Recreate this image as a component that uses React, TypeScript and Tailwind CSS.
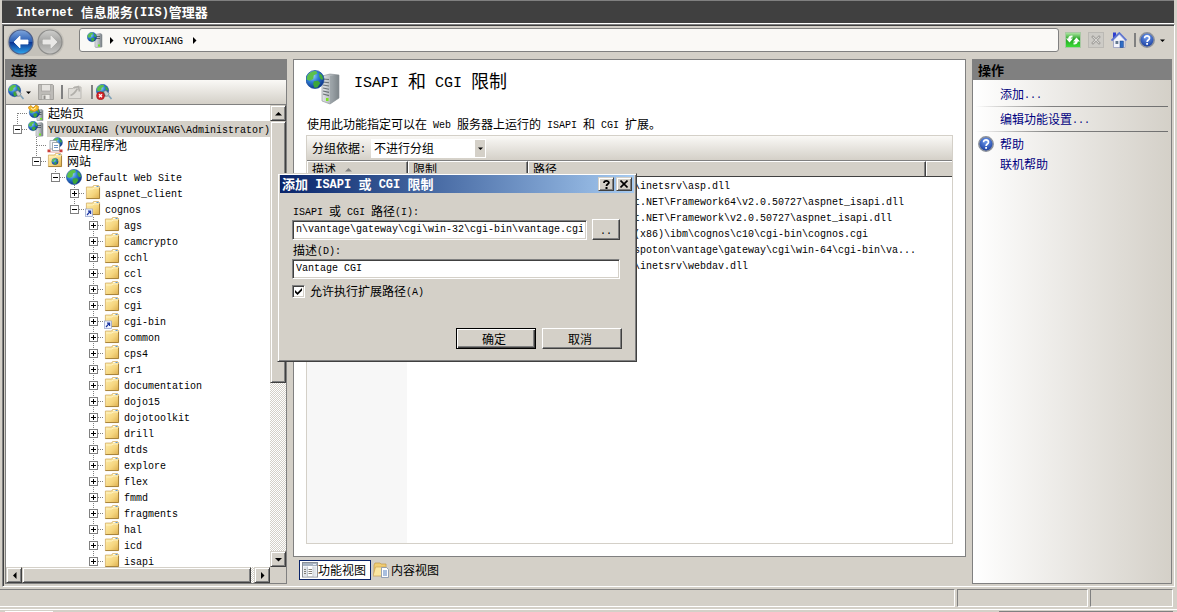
import type { ReactNode } from "react";

const LATIN = /([\x20-\x7e]+)/;

/** Chinese glyphs keep the inherited size; Latin runs use a half-width monospace face. */
function Mixed({ text, latin = "text-[10px]" }: { text: string; latin?: string }) {
  return (
    <span>
      {text.split(LATIN).map((part, i) =>
        i % 2 === 1 ? (
          <span key={i} className={`align-[1px] leading-none whitespace-pre font-['Liberation_Mono',monospace] ${latin}`}>
            {part}
          </span>
        ) : (
          part
        ),
      )}
    </span>
  );
}

const raised =
  "border border-t-[#d4d0c8] border-l-[#d4d0c8] border-r-[#404040] border-b-[#404040] bg-[#d4d0c8] shadow-[inset_1px_1px_#fff,inset_-1px_-1px_#808080]";
const pushButton =
  "border border-t-white border-l-white border-r-[#404040] border-b-[#404040] bg-[#d4d0c8] shadow-[inset_-1px_-1px_#808080]";
const sunken =
  "border border-t-[#808080] border-l-[#808080] border-r-white border-b-white bg-white shadow-[inset_1px_1px_#404040,inset_-1px_-1px_#d4d0c8]";
const checker =
  "bg-[repeating-conic-gradient(#ffffff_0%_25%,#d4d0c8_0%_50%)] bg-[length:2px_2px]";

/* ---------- icons ---------- */

function Defs() {
  return (
    <svg className="absolute size-0" aria-hidden="true">
      <defs>
        <radialGradient id="sea" cx="35%" cy="30%" r="75%">
          <stop offset="0" stopColor="#a9dcfb" />
          <stop offset="0.45" stopColor="#2f7fd6" />
          <stop offset="1" stopColor="#0b2f86" />
        </radialGradient>
        <linearGradient id="server" x1="0" x2="1" y1="0" y2="0">
          <stop offset="0" stopColor="#e3e6e9" />
          <stop offset="0.6" stopColor="#a9b0b5" />
          <stop offset="1" stopColor="#70777c" />
        </linearGradient>
        <linearGradient id="folder" x1="0" x2="1" y1="0" y2="1">
          <stop offset="0" stopColor="#fff0b0" />
          <stop offset="0.6" stopColor="#f5d57e" />
          <stop offset="1" stopColor="#dcae4d" />
        </linearGradient>
        <linearGradient id="back" x1="0" x2="0" y1="0" y2="1">
          <stop offset="0" stopColor="#7fa6dc" />
          <stop offset="0.48" stopColor="#2a5eb4" />
          <stop offset="0.52" stopColor="#0c3592" />
          <stop offset="1" stopColor="#2fa7ee" />
        </linearGradient>
        <linearGradient id="forward" x1="0" x2="0" y1="0" y2="1">
          <stop offset="0" stopColor="#cfcfcd" />
          <stop offset="0.5" stopColor="#a3a3a1" />
          <stop offset="1" stopColor="#c6c6c4" />
        </linearGradient>
        <radialGradient id="help" cx="50%" cy="30%" r="70%">
          <stop offset="0" stopColor="#6f9cf0" />
          <stop offset="1" stopColor="#163a9c" />
        </radialGradient>
        <linearGradient id="green" x1="0" x2="0" y1="0" y2="1">
          <stop offset="0" stopColor="#b4e8a8" />
          <stop offset="0.45" stopColor="#23a423" />
          <stop offset="1" stopColor="#3fe03a" />
        </linearGradient>
      </defs>
    </svg>
  );
}

function Globe({ cx, cy, r }: { cx: number; cy: number; r: number }) {
  return (
    <g transform={`translate(${cx} ${cy}) scale(${r / 8})`}>
      <circle r="7.6" fill="url(#sea)" stroke="#1c4f9c" strokeWidth="0.6" />
      <path d="M-6.5-3C-5-6-2-7.3 1-7.2L2-5-1-3.5-1.5-.5-4.5 1-7 0Z" fill="#5cc04a" />
      <path d="M-1 1.5 2.5 1 4.5 3 2 6.8-.5 7-1.5 4Z" fill="#3da63a" />
      <path d="M3.5-5.5 6-3.5 7 0 5 0 3.5-2.5Z" fill="#43aa3c" />
    </g>
  );
}

function Svg({ size = "size-4", box = 16, children }: { size?: string; box?: number; children: ReactNode }) {
  return (
    <svg className={`${size} shrink-0`} viewBox={`0 0 ${box} ${box}`} aria-hidden="true">
      {children}
    </svg>
  );
}

const ServerIcon = () => (
  <Svg>
    <path d="M8 2.5 13.5 1.5 15 2.5V15L9 15.5 8 15Z" fill="url(#server)" stroke="#8d9499" strokeWidth="0.6" />
    <path d="M9 4.5H13M9 6.5H13" stroke="#4a5055" strokeWidth="0.8" />
    <rect x="11" y="12.5" width="2" height="2" fill="#6eea1c" />
    <Globe cx={5} cy={5} r={5} />
  </Svg>
);

const StartIcon = () => (
  <Svg>
    <path d="M9 5 14 4.5 15 5.5V15.5H9Z" fill="url(#server)" stroke="#8d9499" strokeWidth="0.6" />
    <path d="M10 7.5H13.5M10 9.5H13.5" stroke="#4a5055" strokeWidth="0.8" />
    <rect x="12" y="13" width="2" height="1.6" fill="#6eea1c" />
    <Globe cx={6.5} cy={7.5} r={5.5} />
    <path d="M0 2.5 3 .5 5 3 8 0 10.5 1.5 10 5 6.5 6.5 2.5 5.5Z" fill="#f7b928" stroke="#c98410" strokeWidth="0.7" />
    <path d="M3 3 5 4.5 8 2.5" stroke="#fff3b8" fill="none" />
  </Svg>
);

const BigServerIcon = () => (
  <Svg size="size-9" box={36}>
    <path d="M16 6 24 4 33 5V28L24 34 16 31Z" fill="url(#server)" stroke="#858c91" strokeWidth="0.6" />
    <path d="M24 6 33 5V28L24 34Z" fill="#8a9196" opacity="0.5" />
    <path d="M17 9 23 9.5M17 12 23 12.7M17 15 23 16M17 18 23 19.2M17 21 23 22.4M17 24 23 25.6" stroke="#6a7176" strokeWidth="1.1" />
    <rect x="20" y="28" width="2.5" height="3" fill="#7be61e" />
    <Globe cx={9} cy={9.5} r={9.5} />
  </Svg>
);

const AppPoolIcon = () => (
  <Svg>
    <Globe cx={10.5} cy={5.5} r={5.2} />
    <path d="M3 3.5H9L10 5V12H3Z" fill="#f4f6f8" stroke="#8a949c" strokeWidth="0.7" />
    <path d="M5.5 5.5H11L12.5 7V13.5H5.5Z" fill="#fff" stroke="#7d8891" strokeWidth="0.7" />
    <path d="M7 8.5H11M7 10.5H11" stroke="#4978b5" strokeWidth="0.8" />
    <path d="M.5 12.5H3.5V14H12.5V12.5H15.5V15.2H.5Z" fill="#c9403a" />
    <path d="M3.5 14H12.5V15H3.5Z" fill="#ecd9d6" />
  </Svg>
);

const FolderBase = () => (
  <>
    <path d="M1.4 2H7.5L8.5 .6H13.6L14.6 1.6V13.6H1.4Z" fill="url(#folder)" stroke="#cfa65c" strokeWidth="0.7" />
    <path d="M9 1.5H13.6" stroke="#fffbe6" strokeWidth="1" />
    <path d="M11.5 1.5H13.6" stroke="#4f8fd0" strokeWidth="0.9" />
    <path d="M1.4 13.5H14.5V3" stroke="#a8843c" strokeWidth="1" fill="none" />
    <path d="M2 4H8L9 3H14" stroke="#fff6cf" strokeWidth="0.8" fill="none" />
  </>
);

const FolderIcon = () => (
  <Svg>
    <FolderBase />
  </Svg>
);

const SitesIcon = () => (
  <Svg>
    <FolderBase />
    <Globe cx={8} cy={8.5} r={3.4} />
  </Svg>
);

const VirtualDirIcon = () => (
  <Svg>
    <FolderBase />
    <rect x="0.5" y="8" width="7" height="7.5" fill="#f1f4ff" stroke="#8e9dc8" strokeWidth="0.7" />
    <path d="M2 14 4.8 10.8M3 10.2H5.6V13" stroke="#1b35a0" strokeWidth="1.2" fill="none" />
  </Svg>
);

const SiteIcon = () => (
  <Svg>
    <Globe cx={8} cy={8} r={8} />
  </Svg>
);

const ConnectIcon = ({ off = false }: { off?: boolean }) => (
  <Svg>
    <Globe cx={6.5} cy={6.5} r={6.5} />
    <path d="M7.5 7.5 10 6.5 13 9.5 12 12 9.5 12.3Z" fill="#c4ccd2" stroke="#6b757c" strokeWidth="0.7" />
    <path d="M12.5 11.5 15.5 15" stroke="#7fa2b8" strokeWidth="1.6" />
    {off && (
      <>
        <circle cx="4.5" cy="11.8" r="4" fill="#d3232a" stroke="#8f1217" strokeWidth="0.5" />
        <path d="M3 10.3 6 13.3M6 10.3 3 13.3" stroke="#fff" strokeWidth="1.3" />
      </>
    )}
  </Svg>
);

const SaveIcon = () => (
  <Svg>
    <path d="M.5 .5H14.5L15.5 1.5V15.5H.5Z" fill="#bdbbb7" stroke="#a3a19d" />
    <rect x="3.5" y="0.5" width="9" height="6.5" fill="#e6e4e0" stroke="#a3a19d" strokeWidth="0.7" />
    <rect x="4" y="10.5" width="8" height="5" fill="#eceae6" stroke="#a3a19d" strokeWidth="0.7" />
    <rect x="5.5" y="11.5" width="2" height="3.5" fill="#8e8c88" />
  </Svg>
);

const UpFolderIcon = () => (
  <Svg>
    <path d="M1.5 4.5H6L7 3H14V14.5H1.5Z" fill="#dedcd7" stroke="#bbb9b4" />
    <path d="M3.5 11.5C6 10.5 8.5 8 10.5 4.5M6.5 4 11.5 2.5 12.5 7.5" stroke="#b1afaa" strokeWidth="1.6" fill="none" />
  </Svg>
);

const RefreshIcon = () => (
  <Svg>
    <rect x="0.5" y="0.5" width="15" height="15" fill="url(#green)" stroke="#a9c8a4" />
    <path d="M4.5 10.5 1 6.5H3.2C3.4 4.3 5 3.2 7.5 3.5V5.6C6.3 5.4 5.8 5.7 5.8 6.5H8Z" fill="#fff" />
    <path d="M11.5 5.5 15 9.5H12.8C12.6 11.7 11 12.8 8.5 12.5V10.4C9.7 10.6 10.2 10.3 10.2 9.5H8Z" fill="#fff" />
  </Svg>
);

const StopIcon = () => (
  <Svg>
    <rect x="0.5" y="0.5" width="15" height="15" fill="#cdcbc6" stroke="#bbb9b4" />
    <path d="M4 4 12 12M12 4 4 12" stroke="#a8a6a2" strokeWidth="2.6" />
    <path d="M5 5 11 11M11 5 5 11" stroke="#dddbd7" strokeWidth="0.9" />
  </Svg>
);

const HomeIcon = () => (
  <Svg>
    <rect x="2" y="0.5" width="3" height="6" fill="#2f3fd0" />
    <path d="M2.5 8 8.5 2 14 8V15.5H2.5Z" fill="#f3f4fb" stroke="#8b92bb" strokeWidth="0.7" />
    <path d="M.5 8.5 8.3 1 15.5 8.5" stroke="#5d74cf" strokeWidth="1.8" fill="none" />
    <path d="M3 7.8 8.3 2.8 13 7.8" stroke="#c3cdf2" strokeWidth="0.8" fill="none" />
    <rect x="9" y="9" width="3.4" height="6.5" fill="#2f6cc4" stroke="#173f86" strokeWidth="0.5" />
    <rect x="4.5" y="9" width="2.8" height="3" fill="#64788f" />
  </Svg>
);

const HelpIcon = () => (
  <Svg>
    <circle cx="8" cy="8" r="7.2" fill="url(#help)" stroke="#8d929b" strokeWidth="1.5" />
    <path d="M5.6 6.3C5.6 3 10.6 3.2 10.5 6.2 10.4 8 8.1 8 8.1 9.9" stroke="#fff" strokeWidth="1.7" fill="none" />
    <rect x="7.2" y="11" width="1.8" height="1.8" fill="#fff" />
  </Svg>
);

const FeaturesIcon = () => (
  <Svg>
    <rect x="0.5" y="0.5" width="15" height="14.5" fill="#fff" stroke="#8a8f96" />
    <rect x="1" y="1" width="14" height="3" fill="#a8b4c2" />
    <path d="M11 2.5H14" stroke="#e9eef4" />
    <rect x="1.5" y="4.5" width="3.5" height="10" fill="#dfe3e8" />
    <rect x="11.5" y="4.5" width="3" height="10" fill="#e2e6ea" />
    <path d="M5.5 4.5V15M11 4.5V15" stroke="#b3bac2" strokeWidth="0.8" />
    <path d="M6.5 7.5H10M6.5 9.5H10M6.5 11.5H10M2 7.5H4M2 9.5H4M2 11.5H4" stroke="#77746a" strokeWidth="0.9" />
  </Svg>
);

const ContentIcon = () => (
  <Svg>
    <path d="M1 3 2 1H7L8 2H13V13H1Z" fill="#f0cd73" stroke="#c39a45" strokeWidth="0.7" />
    <path d="M0 14 2.5 5H12L10 14Z" fill="#fbe6a1" stroke="#c9a256" strokeWidth="0.7" />
    <path d="M8.5 5.5H13.5L15.5 7.5V15.5H8.5Z" fill="#fff" stroke="#7d8faa" strokeWidth="0.8" />
    <path d="M10 9H14M10 11H14M10 13H14" stroke="#3e6fb7" strokeWidth="0.9" />
  </Svg>
);

function Triangle({ dir, small = false, className = "" }: { dir: "up" | "down" | "left" | "right"; small?: boolean; className?: string }) {
  const d = {
    up: "M0 5.5 3.5 2 7 5.5Z",
    down: "M0 2 7 2 3.5 5.5Z",
    left: "M5.5 0V7L2 3.5Z",
    right: "M2 0V7L5.5 3.5Z",
  }[dir];
  return (
    <svg className={`${small ? "size-[5px]" : "size-[7px]"} shrink-0 ${className}`} viewBox="0 0 7 7" aria-hidden="true">
      <path d={d} fill="currentColor" />
    </svg>
  );
}

const Divider = () => <span className="h-[14px] w-[2px] shrink-0 bg-[#808080]" />;

/* ---------- window parts ---------- */

function NavButtons() {
  return (
    <div className="flex shrink-0 gap-[3px] rounded-full bg-[#c4c1ba] p-px">
      <button aria-label="后退" className="block">
        <Svg size="size-[26px]" box={26}>
          <circle cx="13" cy="13" r="12" fill="url(#back)" stroke="#4c5f8a" strokeWidth="1.2" />
          <path d="M6 13 12 7V11H20V15H12V19Z" fill="#fff" stroke="#fff" strokeWidth="0.8" strokeLinejoin="round" />
        </Svg>
      </button>
      <button aria-label="前进" className="block">
        <Svg size="size-[26px]" box={26}>
          <circle cx="13" cy="13" r="12" fill="url(#forward)" stroke="#8d8d8b" strokeWidth="1.2" />
          <path d="M20 13 14 7V11H6V15H14V19Z" fill="#e9e8e6" stroke="#e9e8e6" strokeWidth="0.8" strokeLinejoin="round" />
        </Svg>
      </button>
    </div>
  );
}

function AddressBar() {
  return (
    <div className="flex h-[34px] shrink-0 items-center pr-2 pl-1">
      <NavButtons />
      <nav className="mb-1 ml-[15px] flex h-6 min-w-0 flex-1 items-center rounded-[3px] border border-[#808080] bg-[#faf9f6] pl-[7px]">
        <ServerIcon />
        <Triangle dir="right" className="ml-[5px]" />
        <button className="mx-2">
          <Mixed text="YUYOUXIANG" />
        </button>
        <Triangle dir="right" />
      </nav>
      <div className="mb-1 ml-[6px] flex shrink-0 items-center gap-[7px]">
        <button aria-label="刷新"><RefreshIcon /></button>
        <button aria-label="停止"><StopIcon /></button>
        <button aria-label="主页"><HomeIcon /></button>
        <Divider />
        <button aria-label="帮助" className="-ml-1 flex items-center gap-[5px]">
          <HelpIcon />
          <Triangle small dir="down" className="mr-px" />
        </button>
      </div>
    </div>
  );
}

function PanelHeader({ children }: { children: ReactNode }) {
  return (
    <h2 className="h-[21px] shrink-0 bg-[#808080] pl-[6px] text-[13px] leading-[22px] font-bold">{children}</h2>
  );
}

type Node = { label: string; level: number; icon: () => ReactNode; open?: boolean; leaf?: boolean; up?: boolean; down?: boolean; selected?: boolean };

const folders = [
  "ags", "camcrypto", "cchl", "ccl", "ccs", "cgi", "cgi-bin", "common", "cps4", "cr1", "documentation",
  "dojo15", "dojotoolkit", "drill", "dtds", "explore", "flex", "fmmd", "fragments", "hal", "icd", "isapi",
];

const nodes: Node[] = [
  { label: "起始页", level: 0, icon: StartIcon, leaf: true, down: true },
  { label: "YUYOUXIANG (YUYOUXIANG\\Administrator)", level: 0, icon: ServerIcon, open: true, up: true, selected: true },
  { label: "应用程序池", level: 1, icon: AppPoolIcon, leaf: true, up: true, down: true },
  { label: "网站", level: 1, icon: SitesIcon, open: true, up: true },
  { label: "Default Web Site", level: 2, icon: SiteIcon, open: true, up: true },
  { label: "aspnet_client", level: 3, icon: FolderIcon, up: true, down: true },
  { label: "cognos", level: 3, icon: VirtualDirIcon, open: true, up: true },
  ...folders.map((label) => ({
    label,
    level: 4,
    icon: label === "cgi-bin" ? VirtualDirIcon : FolderIcon,
    up: true,
    down: true,
  })),
];

function Branch({ node }: { node: Node }) {
  const svg = (
    <svg className="h-4 w-[19px]" viewBox="0 0 19 16" shapeRendering="crispEdges" aria-hidden="true">
      <g stroke="#808080" strokeDasharray="1 1">
        {node.up && <path d="M9.5 0V8" />}
        {node.down && <path d="M9.5 8V16" />}
        <path d="M10 8.5H19" />
      </g>
      {!node.leaf && (
        <>
          <rect x="5.5" y="4.5" width="8" height="8" fill="#fff" stroke="#808080" />
          <path d="M7 8.5H12" stroke="#000" />
          {!node.open && <path d="M9.5 6V11" stroke="#000" />}
        </>
      )}
    </svg>
  );
  return node.leaf ? svg : (
    <button className="block" aria-label={node.open ? "折叠" : "展开"}>
      {svg}
    </button>
  );
}

const indent = ["pl-[2px]", "pl-[21px]", "pl-[40px]", "pl-[59px]", "pl-[78px]"];

function Tree() {
  return (
    <ul className="min-h-0 min-w-0 flex-1 overflow-hidden bg-white">
      {nodes.map((node) => (
        <li key={node.label} className={`flex h-4 items-center whitespace-nowrap ${indent[node.level]}`}>
          <Branch node={node} />
          <span className="ml-px flex">
            <node.icon />
          </span>
          <span className={`ml-[3px] h-4 px-px leading-4 ${node.selected ? "bg-[#d4d0c8]" : ""}`}>
            <Mixed text={node.label} />
          </span>
        </li>
      ))}
    </ul>
  );
}

const scrollButton = `flex size-4 shrink-0 items-center justify-center ${raised}`;

function ConnectionsPanel() {
  return (
    <section className="flex w-[282px] shrink-0 flex-col border-b border-[#808080]">
      <PanelHeader>连接</PanelHeader>
      <div className="flex min-h-0 flex-1 flex-col border-x border-[#808080]">
        <div className="flex h-[25px] shrink-0 items-center border-b border-[#808080] bg-linear-to-b from-[#faf9f6] to-[#d4d0c8] pl-[2px]">
          <button aria-label="连接" className="flex items-center gap-[2px]">
            <ConnectIcon />
            <Triangle small dir="down" />
          </button>
          <button aria-label="保存" className="mr-[7px] ml-[7px]"><SaveIcon /></button>
          <Divider />
          <button aria-label="向上" className="mr-2 ml-1"><UpFolderIcon /></button>
          <Divider />
          <button aria-label="删除连接" className="ml-[3px]"><ConnectIcon off /></button>
        </div>
        <div className="flex min-h-0 flex-1">
          <Tree />
          <div className={`flex w-4 shrink-0 flex-col ${checker}`}>
            <button aria-label="向上滚动" className={scrollButton}><Triangle dir="up" /></button>
            <div className={`basis-[262px] ${raised}`} />
            <button aria-label="向下滚动" className={`mt-auto ${scrollButton}`}><Triangle dir="down" /></button>
          </div>
        </div>
        <div className="flex h-4 shrink-0">
          <div className={`flex min-w-0 flex-1 ${checker}`}>
            <button aria-label="向左滚动" className={scrollButton}><Triangle dir="left" /></button>
            <div className={`mr-[3px] flex-1 ${raised}`} />
            <button aria-label="向右滚动" className={scrollButton}><Triangle dir="right" /></button>
          </div>
          <div className="w-4" />
        </div>
      </div>
    </section>
  );
}

const paths = [
  "%windir%\\system32\\inetsrv\\asp.dll",
  "%windir%\\Microsoft.NET\\Framework64\\v2.0.50727\\aspnet_isapi.dll",
  "%windir%\\Microsoft.NET\\Framework\\v2.0.50727\\aspnet_isapi.dll",
  "C:\\Program Files (x86)\\ibm\\cognos\\c10\\cgi-bin\\cognos.cgi",
  "C:\\Program Files\\spoton\\vantage\\gateway\\cgi\\win-64\\cgi-bin\\va...",
  "%windir%\\system32\\inetsrv\\webdav.dll",
];

const th =
  "h-4 border-t border-r border-b border-t-white border-r-[#404040] border-b-[#404040] p-0 pl-[5px] text-left font-normal leading-[14px] shadow-[inset_1px_0_#fff,inset_-1px_0_#808080]";

function FeaturePanel() {
  return (
    <main className="flex min-w-0 flex-1 flex-col">
      <div className="flex min-h-0 flex-1 flex-col border border-[#808080] bg-white px-3 pt-[10px] pb-3">
        <div className="flex h-9 shrink-0 items-start">
          <BigServerIcon />
          <h1 className="ml-3 text-[18px] leading-5">
            <Mixed text="ISAPI 和 CGI 限制" latin="text-[15px]" />
          </h1>
        </div>
        <p className="mt-[10px] mb-[3px] pl-px leading-4">
          <Mixed text="使用此功能指定可以在 Web 服务器上运行的 ISAPI 和 CGI 扩展。" />
        </p>
        <div className="flex min-h-0 flex-1 flex-col border border-[#d4d0c8]">
          <div className="flex h-[25px] shrink-0 items-center border-b border-[#808080] bg-linear-to-b from-[#faf9f6] to-[#d4d0c8] pl-[5px]">
            <label htmlFor="group">
              <Mixed text="分组依据:" />
            </label>
            <div className="relative ml-[5px] flex h-[19px] w-[115px] bg-white">
              <select id="group" className="w-full appearance-none bg-white pl-[3px] outline-none">
                <option>不进行分组</option>
              </select>
              <span className="pointer-events-none absolute inset-y-px right-px flex w-[10px] items-center justify-center bg-[#d4d0c8]">
                <Triangle small dir="down" />
              </span>
            </div>
          </div>
          <div className="min-h-0 flex-1 overflow-hidden bg-[linear-gradient(to_right,#f7f7f7_100px,#ffffff_100px)]">
            <table className="w-full table-fixed border-separate border-spacing-0">
              <colgroup>
                <col className="w-[101px]" />
                <col className="w-[120px]" />
                <col />
                <col className="w-[26px]" />
              </colgroup>
              <thead className="bg-[#d4d0c8]">
                <tr>
                  <th className={th}>
                    <span className="flex items-center gap-[9px]">
                      描述
                      <Triangle dir="up" className="text-[#808080]" />
                    </span>
                  </th>
                  <th className={th}>限制</th>
                  <th className={th}>路径</th>
                  <th className="border-t border-b border-t-white border-b-[#404040] p-0 shadow-[inset_1px_0_#fff]" />
                </tr>
              </thead>
              <tbody>
                {paths.map((path) => (
                  <tr key={path}>
                    <td className="h-4 p-0" />
                    <td className="p-0" />
                    <td className="overflow-hidden p-0 pl-1 leading-4 whitespace-nowrap">
                      <Mixed text={path} />
                    </td>
                    <td className="p-0" />
                  </tr>
                ))}
              </tbody>
            </table>
          </div>
        </div>
      </div>
      <div className="flex h-[27px] shrink-0 items-start gap-px pt-[3px] pl-[6px]">
        <button className="flex h-5 items-center border border-[#0a246a] bg-white px-[2px] pr-1">
          <FeaturesIcon />
          功能视图
        </button>
        <button className="flex h-5 items-center gap-[2px] px-px">
          <ContentIcon />
          内容视图
        </button>
      </div>
    </main>
  );
}

const Rule = () => <hr className="h-px border-0 bg-linear-to-r from-transparent via-[#808080] via-40% to-[#707070]" />;

function ActionsPanel() {
  return (
    <aside className="flex w-[200px] shrink-0 flex-col">
      <PanelHeader>操作</PanelHeader>
      <div className="flex flex-1 flex-col border-x border-b border-[#808080] bg-linear-to-r from-white to-[#d4d0c8] pt-[6px] pr-[3px] pl-[2px] text-[#000080]">
        <a href="#add" className="h-5 pl-[25px] leading-4"><Mixed text="添加..." /></a>
        <Rule />
        <a href="#edit" className="h-6 pl-[25px] leading-6"><Mixed text="编辑功能设置..." /></a>
        <Rule />
        <a href="#help" className="flex h-6 items-center gap-[6px] pl-[3px]">
          <HelpIcon />
          帮助
        </a>
        <a href="#online-help" className="h-4 pl-[25px] leading-4">联机帮助</a>
      </div>
    </aside>
  );
}

const field = `h-5 min-w-0 px-[3px] pb-px font-['Liberation_Mono',monospace] text-[10px] outline-none ${sunken}`;
const titleButton = `flex h-[14px] w-4 items-center justify-center text-black ${raised}`;

function RestrictionDialog() {
  return (
    <div role="dialog" aria-labelledby="dialog-title" className={`absolute top-[173px] left-[277px] w-[360px] p-px pr-[2px] pb-3 ${raised}`}>
      <div className="ml-px flex h-[18px] items-center bg-linear-to-r from-[#0a246a] to-[#a6caf0] pr-[2px] pl-[2px] text-white">
        <h2 id="dialog-title" className="flex-1 text-[13px] leading-[18px] font-bold whitespace-nowrap">
          <Mixed text="添加 ISAPI 或 CGI 限制" latin="text-[12px]" />
        </h2>
        <button aria-label="帮助" className={titleButton}>
          <svg className="size-[9px]" viewBox="0 0 9 9" aria-hidden="true">
            <path d="M2 3C2 .3 7 .4 6.9 2.7 6.8 4 4.5 4.1 4.5 6" stroke="currentColor" strokeWidth="1.8" fill="none" />
            <rect x="3.5" y="7" width="2" height="2" fill="currentColor" />
          </svg>
        </button>
        <button aria-label="关闭" className={`ml-[2px] ${titleButton}`}>
          <svg className="size-2" viewBox="0 0 8 8" aria-hidden="true">
            <path d="M.5 .5 7.5 7.5M7.5 .5 .5 7.5" stroke="currentColor" strokeWidth="1.6" />
          </svg>
        </button>
      </div>
      <form className="flex flex-col pt-[9px] pr-3 pl-[13px]" onSubmit={(e) => e.preventDefault()}>
        <label htmlFor="path" className="h-[17px] pl-px leading-[17px]"><Mixed text="ISAPI 或 CGI 路径(I):" /></label>
        <div className="flex items-end gap-[5px] pr-[2px]">
          <input id="path" className={`flex-1 ${field}`} defaultValue="n\vantage\gateway\cgi\win-32\cgi-bin\vantage.cgi" />
          <button type="button" className={`h-[21px] w-7 ${pushButton}`}><Mixed text=".." /></button>
        </div>
        <label htmlFor="desc" className="h-[19px] pl-px leading-[19px]"><Mixed text="描述(D):" /></label>
        <input id="desc" className={`mr-[2px] ${field}`} defaultValue="Vantage CGI" />
        <label className="mt-1 flex h-4 items-center gap-[5px] leading-4">
          <span className="relative flex">
            <input type="checkbox" defaultChecked className={`peer size-[13px] appearance-none ${sunken}`} />
            <svg className="pointer-events-none absolute inset-[3px] hidden size-[7px] peer-checked:block" viewBox="0 0 7 7" aria-hidden="true">
              <path d="M0 2V4.6L2.5 7 7 2.6V0L2.5 4.4Z" />
            </svg>
          </span>
          <Mixed text="允许执行扩展路径(A)" />
        </label>
        <div className="mt-[29px] flex justify-end gap-[6px]">
          <button className="h-[21px] w-20 border border-black bg-[#d4d0c8] pr-1 shadow-[inset_1px_1px_#fff,inset_-1px_-1px_#404040,inset_-2px_-2px_#808080]">确定</button>
          <button type="button" className={`h-[21px] w-20 pr-1 ${pushButton}`}>取消</button>
        </div>
      </form>
    </div>
  );
}

const pane = "h-[18px] border border-t-[#808080] border-l-[#808080] border-r-white border-b-white";

export default function App() {
  return (
    <div className="relative flex h-screen w-full flex-col overflow-hidden bg-[#d4d0c8] font-['Noto_Sans_CJK_SC',sans-serif] text-[12px] leading-4 text-black">
      <Defs />
      <header className="mr-[3px] ml-[2px] h-6 shrink-0 border-t border-b border-t-[#808080] border-b-white bg-[#404040] pl-[14px] text-[13px] leading-[22px] font-bold text-white">
        <Mixed text="Internet 信息服务(IIS)管理器" latin="text-[12px]" />
      </header>
      <div className="mr-[2px] ml-[2px] flex min-h-0 flex-1 flex-col border border-t-[#808080] border-r-white border-b-white border-l-[#808080] pb-[2px] shadow-[inset_1px_1px_#404040]">
        <AddressBar />
        <div className="flex min-h-0 flex-1 gap-[6px] px-[2px]">
          <ConnectionsPanel />
          <FeaturePanel />
          <ActionsPanel />
        </div>
      </div>
      <footer className="shrink-0 pt-[2px]">
        <div className="flex gap-[2px] pr-1">
          <div className={`flex-1 border-l-0 ${pane}`} />
          <div className={`w-[131px] ${pane}`} />
          <div className={`w-[83px] ${pane}`} />
        </div>
        <div className="mt-[2px] flex h-[3px] items-end justify-between border-t border-white pr-1 pl-[5px]">
          <div className="h-px w-12 bg-white" />
          <div className="h-px w-[174px] bg-[#808080]" />
        </div>
      </footer>
      <RestrictionDialog />
    </div>
  );
}
